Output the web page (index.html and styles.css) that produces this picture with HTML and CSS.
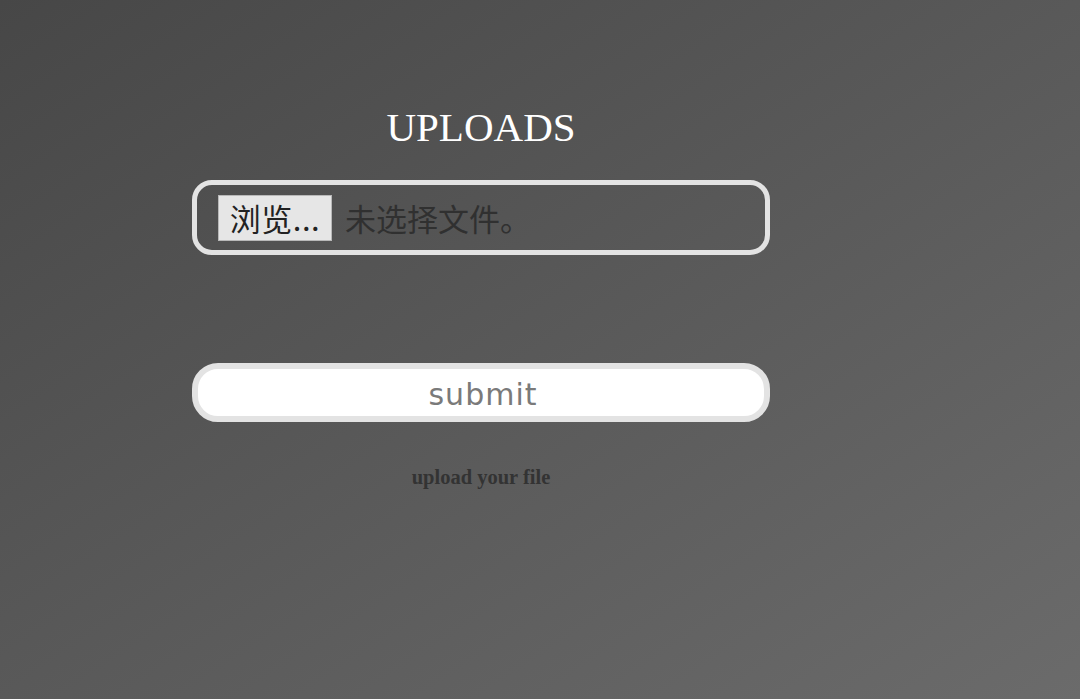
FILE: index.html
```html
<!DOCTYPE html>
<html lang="zh">
<head>
<meta charset="utf-8">
<title>Uploads</title>
<link rel="stylesheet" href="styles.css">
</head>
<body>
<form class="upload-form">
  <h1 class="title">UPLOADS</h1>
  <div class="file-field">
    <span class="browse-btn">浏览...</span>
    <span class="file-name">未选择文件。</span>
  </div>
  <button type="button" class="submit-btn">submit</button>
  <p class="hint">upload your file</p>
</form>
</body>
</html>
```
FILE: styles.css
```css
html, body {
  margin: 0;
  height: 100%;
}
body {
  min-height: 100vh;
  background: linear-gradient(to bottom right, #474747, #6b6b6b);
  font-family: "Liberation Serif", serif;
}
.upload-form {
  width: 578px;
  margin-left: 192px;
  padding-top: 104px;
  display: flex;
  flex-direction: column;
}
.title {
  margin: 0;
  font-size: 41px;
  font-weight: normal;
  line-height: 46px;
  color: #ffffff;
  text-align: center;
}
.file-field {
  margin-top: 30px;
  box-sizing: border-box;
  height: 75px;
  border: 5px solid #e3e3e3;
  border-radius: 20px;
  padding: 0 21px;
  display: flex;
  align-items: center;
  font-family: "Noto Sans CJK SC", "Noto Sans", sans-serif;
}
.browse-btn {
  box-sizing: border-box;
  height: 46px;
  width: 114px;
  display: flex;
  align-items: center;
  justify-content: center;
  background: #e6e6e6;
  border: 1px solid #b8b8b8;
  color: #222222;
  font-size: 31px;
  letter-spacing: 0.5px;
  white-space: nowrap;
}
.file-name {
  margin-left: 13px;
  color: #303030;
  font-size: 31px;
}
.submit-btn {
  margin-top: 108px;
  box-sizing: border-box;
  height: 59px;
  width: 100%;
  border: 6px solid #e3e3e3;
  border-radius: 26px;
  background: #ffffff;
  color: #7a7a7a;
  font-family: "DejaVu Sans", sans-serif;
  font-size: 30px;
  letter-spacing: 1px;
  padding: 4px 0 0 4px;
  line-height: 44px;
}
.hint {
  margin: 44px 0 0;
  text-align: center;
  font-size: 20.5px;
  line-height: 23px;
  font-weight: bold;
  color: #333333;
}
```
